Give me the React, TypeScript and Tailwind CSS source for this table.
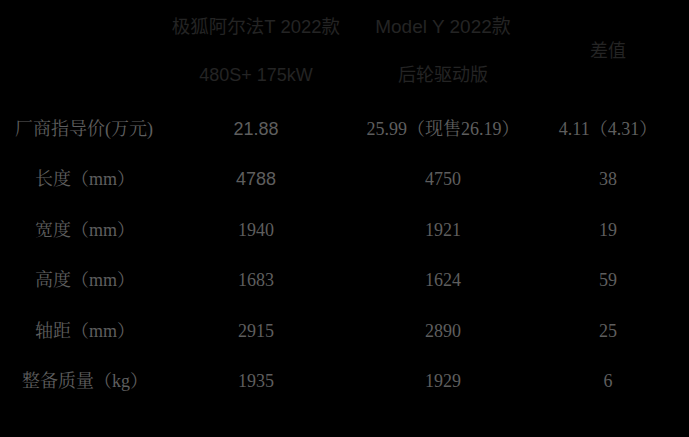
import React from "react";

const serif = "font-['Liberation_Serif','Noto_Serif_CJK_SC','Noto_Sans_CJK_SC',serif]";
const sans = "font-['Liberation_Sans','Noto_Sans_CJK_SC',sans-serif]";

type Row = { label: string; a: string; b: string; d: string; aSans?: boolean; labelCls?: string };

const rows: Row[] = [
  { label: "厂商指导价(万元)", a: "21.88", b: "25.99（现售26.19）", d: "4.11（4.31）", aSans: true, labelCls: "pr-[2px]" },
  { label: "长度（mm）", a: "4788", b: "4750", d: "38", aSans: true },
  { label: "宽度（mm）", a: "1940", b: "1921", d: "19" },
  { label: "高度（mm）", a: "1683", b: "1624", d: "59" },
  { label: "轴距（mm）", a: "2915", b: "2890", d: "25" },
  { label: "整备质量（kg）", a: "1935", b: "1929", d: "6" },
];

export default function App() {
  return (
    <div className="w-[689px] h-[437px] bg-black overflow-hidden pt-[3px]">
      <div className="grid grid-cols-[170px_172px_202px_128px] grid-rows-[48px_48px] text-[#242424]">
        <div className="row-span-2" />
        <div className={`flex items-center justify-center text-[18.5px] ${sans}`}>极狐阿尔法T 2022款</div>
        <div className={`flex items-center justify-center text-[19px] ${sans}`}>Model Y 2022款</div>
        <div className={`row-span-2 flex items-center justify-center text-[18px] ${sans}`}>差值</div>
        <div className={`flex items-center justify-center text-[18px] ${sans}`}>480S+ 175kW</div>
        <div className={`flex items-center justify-center text-[18px] ${sans}`}>后轮驱动版</div>
      </div>
      <div className="mt-[5px] grid grid-cols-[170px_172px_202px_128px] auto-rows-[50.5px] text-[#5e5e5e] text-[18px]">
        {rows.map((r) => (
          <React.Fragment key={r.label}>
            <div className={`flex items-center justify-center ${serif} ${r.labelCls ?? ""}`}>{r.label}</div>
            <div className={`flex items-center justify-center ${r.aSans ? sans : serif}`}>{r.a}</div>
            <div className={`flex items-center justify-center ${serif}`}>{r.b}</div>
            <div className={`flex items-center justify-center ${serif}`}>{r.d}</div>
          </React.Fragment>
        ))}
      </div>
    </div>
  );
}
